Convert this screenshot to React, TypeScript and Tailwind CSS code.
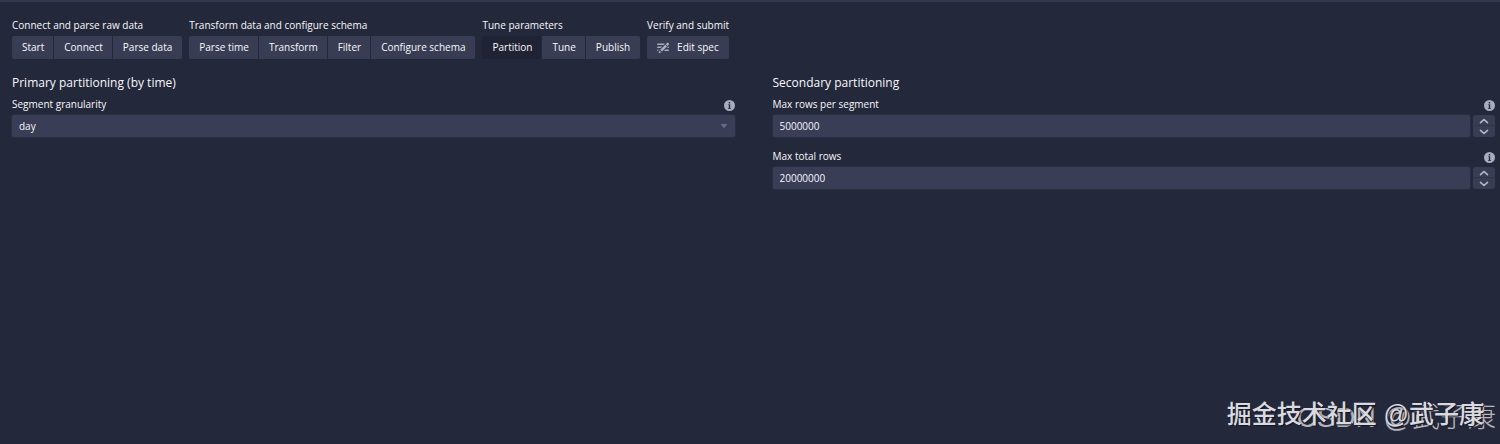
import { useState } from 'react';

const stepGroups = [
  { title: 'Connect and parse raw data', steps: ['Start', 'Connect', 'Parse data'] },
  { title: 'Transform data and configure schema', steps: ['Parse time', 'Transform', 'Filter', 'Configure schema'] },
  { title: 'Tune parameters', steps: ['Partition', 'Tune', 'Publish'] },
  { title: 'Verify and submit', steps: ['Edit spec'] },
];

function Icon({ name, className }: { name: 'edit' | 'info' | 'caret' | 'up' | 'down'; className?: string }) {
  if (name === 'edit') {
    return (
      <svg className={className} viewBox="0 0 16 16" fill="currentColor" aria-hidden="true">
        <path d="M1 8h3.76l2-2H1c-.55 0-1 .45-1 1s.45 1 1 1zm14.49-4.01c.31-.32.51-.76.51-1.24C16 1.78 15.22 1 14.25 1c-.48 0-.92.2-1.24.51l-1.44 1.44 2.47 2.47 1.45-1.43zM1 4h7.76l2-2H1c-.55 0-1 .45-1 1s.45 1 1 1zm0 6c-.55 0-1 .45-1 1 0 .48.35.86.8.96L2.76 10H1zm9.95-6.43l-6.69 6.69 2.47 2.47 6.69-6.69-2.47-2.47zm4.25 2.47L13.24 8H15c.55 0 1-.45 1-1 0-.48-.35-.86-.8-.96zM2 15l3.86-1.39-2.46-2.44L2 15zm13-5h-3.76l-2 2H15c.55 0 1-.45 1-1s-.45-1-1-1z" />
      </svg>
    );
  }
  if (name === 'info') {
    return (
      <svg className={className} viewBox="0 0 16 16" fill="currentColor" aria-hidden="true">
        <path fillRule="evenodd" d="M8 0a8 8 0 1 0 0 16A8 8 0 0 0 8 0ZM7 3h2v2H7V3Zm3 10H6v-1h1V7H6V6h3v6h1v1Z" />
      </svg>
    );
  }
  if (name === 'caret') {
    return (
      <svg className={className} viewBox="0 0 8 6" fill="currentColor" aria-hidden="true">
        <path d="M1.5 1h5q1 0 .4.8L4.5 4.7q-.5.5-1 0L1.1 1.8Q.5 1 1.5 1Z" />
      </svg>
    );
  }
  return (
    <svg className={className} viewBox="0 0 10 6" fill="none" aria-hidden="true">
      <path d={name === 'up' ? 'M1.5 4.7 5 1.5 8.5 4.7' : 'M1.5 1.3 5 4.5 8.5 1.3'} stroke="currentColor" strokeWidth="1.6" strokeLinecap="round" strokeLinejoin="round" />
    </svg>
  );
}

function FieldLabel({ id, text }: { id: string; text: string }) {
  return (
    <div className="mb-[3px] flex h-4 items-center justify-between">
      <label htmlFor={id} className="text-[10px] leading-4">{text}</label>
      <button type="button" aria-label={`About ${text}`} className="mt-[2px] text-[#a9abbe]">
        <Icon name="info" className="h-[11px] w-[11px]" />
      </button>
    </div>
  );
}

function NumberField({ id, label, initial }: { id: string; label: string; initial: number }) {
  const [value, setValue] = useState(initial);

  return (
    <div>
      <FieldLabel id={id} text={label} />
      <div className="flex gap-[3px]">
        <input
          id={id}
          type="text"
          inputMode="numeric"
          value={value}
          onChange={(e) => setValue(Number(e.target.value) || 0)}
          className="h-[22px] min-w-0 flex-1 rounded-[2px] bg-[#393d56] px-[7px] text-[10px] shadow-[0_0_0_1px_#2b2e43]"
        />
        <div className="flex w-[22px] flex-col overflow-hidden rounded-[2px] text-[#b4b6c7]">
          <button type="button" aria-label={`Increase ${label}`} onClick={() => setValue(value + 1)} className="flex flex-1 items-center justify-center bg-[#393d54] shadow-[inset_0_-1px_0_#30334a]">
            <Icon name="up" className="h-[6px] w-[10px]" />
          </button>
          <button type="button" aria-label={`Decrease ${label}`} onClick={() => setValue(value - 1)} className="flex flex-1 items-center justify-center bg-[#393d54]">
            <Icon name="down" className="h-[6px] w-[10px]" />
          </button>
        </div>
      </div>
    </div>
  );
}

export default function App() {
  const [active, setActive] = useState('Partition');
  const [granularity, setGranularity] = useState('day');

  return (
    <div className="relative min-h-screen overflow-hidden border-t-2 border-[#34374f] bg-[#24283b] font-['Open_Sans','Noto_Sans_CJK_SC',sans-serif] text-[#f8f8fc]">
      <nav className="flex flex-wrap gap-x-[7px] gap-y-2 pt-[15px] pl-[12px]">
        {stepGroups.map((group) => (
          <div key={group.title}>
            <div className="mb-[3px] text-[10px] leading-4 whitespace-nowrap">{group.title}</div>
            <div className="flex">
              {group.steps.map((step) => (
                <button
                  key={step}
                  type="button"
                  onClick={() => setActive(step)}
                  className={`flex h-[23px] items-center gap-2 px-[10px] text-[10px] whitespace-nowrap shadow-[inset_-1px_0_0_#25283c] first:rounded-l-[2px] last:rounded-r-[2px] last:shadow-none ${
                    step === active ? 'bg-[#202334]' : 'bg-[#393d54]'
                  }`}
                >
                  {step === 'Edit spec' && <Icon name="edit" className="h-3 w-3 text-[#a9abbe]" />}
                  {step}
                </button>
              ))}
            </div>
          </div>
        ))}
      </nav>

      <main className="grid grid-cols-2 gap-x-[38px] pt-[15px] pr-[5px] pl-[12px]">
        <section>
          <h2 className="mb-1 text-[12px] leading-[18px]">Primary partitioning (by time)</h2>
          <FieldLabel id="granularity" text="Segment granularity" />
          <div className="relative">
            <select
              id="granularity"
              value={granularity}
              onChange={(e) => setGranularity(e.target.value)}
              className="block h-[22px] w-full appearance-none rounded-[2px] bg-[#393d56] px-[7px] text-[10px] shadow-[0_0_0_1px_#2b2e43]"
            >
              <option>hour</option>
              <option>day</option>
              <option>month</option>
              <option>year</option>
            </select>
            <Icon name="caret" className="pointer-events-none absolute top-2 right-[7px] h-[6px] w-2 text-[#686b87]" />
          </div>
        </section>

        <section>
          <h2 className="mb-1 text-[12px] leading-[18px]">Secondary partitioning</h2>
          <div className="space-y-[11px]">
            <NumberField id="max-rows" label="Max rows per segment" initial={5000000} />
            <NumberField id="max-total" label="Max total rows" initial={20000000} />
          </div>
        </section>
      </main>

      <div className="pointer-events-none absolute right-1 bottom-2 font-['Liberation_Sans','Noto_Sans_CJK_SC',sans-serif] text-[28px] leading-9 font-light whitespace-nowrap text-[#b4b5bd]">CSDN @武子康</div>
      <div className="pointer-events-none absolute right-4 bottom-3 font-['Liberation_Sans','Noto_Sans_CJK_SC',sans-serif] text-[25px] leading-9 font-medium whitespace-nowrap text-[#d9dae0] [text-shadow:1px_1px_1px_#14151f]">掘金技术社区 @武子康</div>
    </div>
  );
}
